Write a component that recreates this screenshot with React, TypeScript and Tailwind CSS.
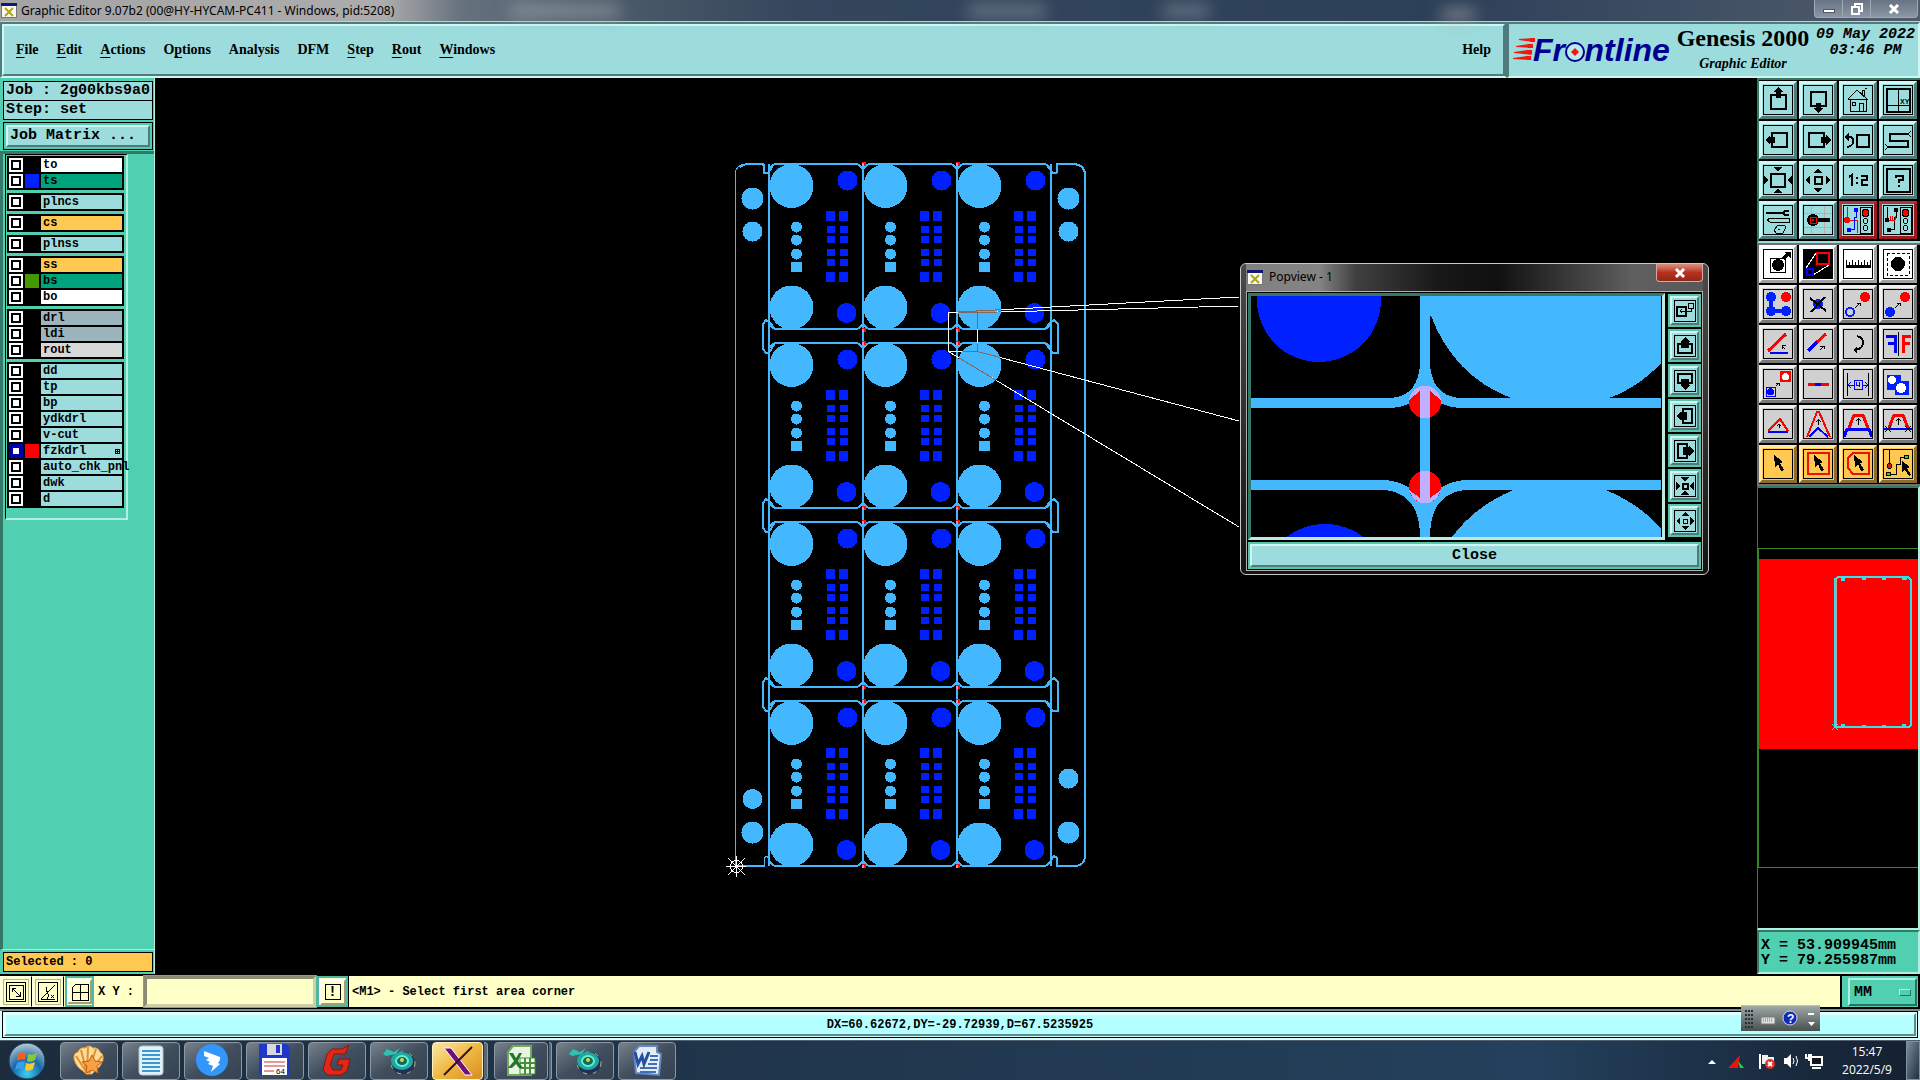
import { useState } from "react";
import type { ReactNode } from "react";

const SKY = "#44b8ff";
const BLUE = "#0020ff";

const menus = [
  { label: "File", key: 0 },
  { label: "Edit", key: 0 },
  { label: "Actions", key: 0 },
  { label: "Options", key: 1 },
  { label: "Analysis", key: -1 },
  { label: "DFM", key: -1 },
  { label: "Step", key: 0 },
  { label: "Rout", key: 0 },
  { label: "Windows", key: 0 },
];

type Layer = { name: string; bg: string; swatch?: string; active?: boolean };

const layerGroups: Layer[][] = [
  [
    { name: "to", bg: "bg-white" },
    { name: "ts", bg: "bg-[#00a47c]", swatch: "bg-[#0020ff]" },
  ],
  [{ name: "plncs", bg: "bg-[#9cdcdc]" }],
  [{ name: "cs", bg: "bg-[#ffc850]" }],
  [{ name: "plnss", bg: "bg-[#9cdcdc]" }],
  [
    { name: "ss", bg: "bg-[#ffc850]" },
    { name: "bs", bg: "bg-[#00a47c]", swatch: "bg-[#449800]" },
    { name: "bo", bg: "bg-white" },
  ],
  [
    { name: "drl", bg: "bg-[#9cb4bc]" },
    { name: "ldi", bg: "bg-[#9cb4bc]" },
    { name: "rout", bg: "bg-[#d8d8d8]" },
  ],
  [
    { name: "dd", bg: "bg-[#9cdcdc]" },
    { name: "tp", bg: "bg-[#9cdcdc]" },
    { name: "bp", bg: "bg-[#9cdcdc]" },
    { name: "ydkdrl", bg: "bg-[#9cdcdc]" },
    { name: "v-cut", bg: "bg-[#9cdcdc]" },
    { name: "fzkdrl", bg: "bg-[#9cdcdc]", swatch: "bg-[#ff0000]", active: true },
    { name: "auto_chk_pnl", bg: "bg-[#9cdcdc]" },
    { name: "dwk", bg: "bg-[#9cdcdc]" },
    { name: "d", bg: "bg-[#9cdcdc]" },
  ],
];

// bevel styles of the Motif buttons
const cyanTone =
  "bg-[#9cdcdc] border-t-[#d0f6f4] border-l-[#d0f6f4] border-b-[#4e7c7c] border-r-[#4e7c7c]";
const redTone =
  "bg-[#9cdcdc] border-t-[#b83038] border-l-[#b83038] border-b-[#9c1820] border-r-[#9c1820]";
const whiteTone =
  "bg-white border-t-white border-l-white border-b-[#a0a0a0] border-r-[#a0a0a0]";
const grayTone =
  "bg-[#d0d0d0] border-t-[#f0f0f0] border-l-[#f0f0f0] border-b-[#787878] border-r-[#787878]";
const orangeTone =
  "bg-[#ffc850] border-t-[#ffe8a8] border-l-[#ffe8a8] border-b-[#8c6c28] border-r-[#8c6c28]";
const tealTone =
  "bg-[#50d0b0] border-t-[#b0f0e0] border-l-[#b0f0e0] border-b-[#2c7060] border-r-[#2c7060]";

const Cursor = () => (
  <path d="M11 6 L20 13 L17 14 L21 21 L18 22 L15 15 L12 18Z" fill="#000" />
);

const TrafficLight = () => (
  <g fill="none" stroke="#000">
    <rect x="17" y="2" width="11" height="26" />
    <circle cx="22.5" cy="8" r="3.5" fill="#f00" />
    <circle cx="22.5" cy="16" r="2.5" />
    <circle cx="22.5" cy="23" r="2.5" />
  </g>
);

const viewTools: { name: string; tone: string; icon: ReactNode }[] = [
  {
    name: "Pan up",
    tone: cyanTone,
    icon: (
      <>
        <rect x="8" y="10" width="15" height="14" fill="none" stroke="#000" strokeWidth="2" />
        <path d="M15 2 L20 7 H18 V13 H13 V7 H10Z" />
      </>
    ),
  },
  {
    name: "Pan down",
    tone: cyanTone,
    icon: (
      <>
        <rect x="8" y="7" width="15" height="14" fill="none" stroke="#000" strokeWidth="2" />
        <path d="M15 28 L20 23 H18 V18 H13 V23 H10Z" />
      </>
    ),
  },
  {
    name: "Home",
    tone: cyanTone,
    icon: (
      <g fill="none" stroke="#000">
        <path d="M5 14 L14 5 L24 14 H5 M7 14 V26 H23 V14 M19 9 V5 H21 V11 M22 3 H24 M16 26 V18 H20 V26" />
        <rect x="9" y="17" width="3" height="3" />
      </g>
    ),
  },
  {
    name: "Zoom to XY",
    tone: cyanTone,
    icon: (
      <>
        <rect x="4" y="4" width="23" height="23" fill="none" stroke="#000" strokeWidth="2" />
        <path d="M4 20.5 H27 M15.5 4 V27" stroke="#000" />
        <text x="17" y="19" className="font-[Liberation_Sans,sans-serif] text-[7px] font-bold">XY</text>
      </>
    ),
  },
  {
    name: "Pan left",
    tone: cyanTone,
    icon: (
      <>
        <rect x="9" y="8" width="15" height="14" fill="none" stroke="#000" strokeWidth="2" />
        <path d="M2 15 L7 10 V12 H12 V18 H7 V20Z" />
      </>
    ),
  },
  {
    name: "Pan right",
    tone: cyanTone,
    icon: (
      <>
        <rect x="6" y="8" width="15" height="14" fill="none" stroke="#000" strokeWidth="2" />
        <path d="M28 15 L23 10 V12 H18 V18 H23 V20Z" />
      </>
    ),
  },
  {
    name: "Previous view",
    tone: cyanTone,
    icon: (
      <>
        <rect x="14" y="10" width="12" height="12" fill="none" stroke="#000" strokeWidth="2" />
        <path d="M4 12 H8 Q11 14 10 18 Q9 21 4 22" fill="none" stroke="#000" strokeWidth="2" />
        <path d="M1 12 L6 8 V16Z" />
      </>
    ),
  },
  {
    name: "Snake",
    tone: cyanTone,
    icon: (
      <>
        <path d="M26 9 H7 V16 H25 V22 H5" fill="none" stroke="#000" strokeWidth="2" />
        <path d="M28 6 L25 9 L28 12 M2 19 L5 22 L2 25" fill="none" stroke="#000" />
      </>
    ),
  },
  {
    name: "Zoom in",
    tone: cyanTone,
    icon: (
      <>
        <rect x="8" y="9" width="14" height="13" fill="none" stroke="#000" strokeWidth="2" />
        <path d="M15 6 L10 2 H20Z M15 24 L10 28 H20Z M5 15 L1 10 V20Z M25 15 L29 10 V20Z" />
      </>
    ),
  },
  {
    name: "Zoom out",
    tone: cyanTone,
    icon: (
      <>
        <rect x="12" y="12" width="7" height="7" fill="none" stroke="#000" strokeWidth="2" />
        <path d="M15 4 L10 8 H20Z M15 27 L10 23 H20Z M3 15 L7 10 V20Z M27 15 L23 10 V20Z" />
      </>
    ),
  },
  {
    name: "Scale",
    tone: cyanTone,
    icon: (
      <g fill="none" stroke="#000" strokeWidth="2">
        <path d="M6 12 L9 10 V21 M18 11 H24 V15 H19 V20 H25" />
        <path d="M13 13 H15 M13 18 H15" />
      </g>
    ),
  },
  {
    name: "Help on tool",
    tone: cyanTone,
    icon: (
      <>
        <rect x="4" y="4" width="23" height="23" fill="none" stroke="#000" strokeWidth="2" />
        <path d="M13 13 V11 H20 V15 H16 V18 M16 20 V22" fill="none" stroke="#000" strokeWidth="2" />
      </>
    ),
  },
  {
    name: "Setup",
    tone: cyanTone,
    icon: (
      <>
        <path d="M3 8 H20" stroke="#000" strokeWidth="2" />
        <path d="M26 6 H22 L20 8 L22 10 H26" fill="none" stroke="#000" strokeWidth="2" />
        <path d="M4 15 L7 13 H26 V17 H7Z" fill="none" stroke="#000" />
        <path d="M11 25 L15 20 H21 L23 22 L20 28 H13Z M15 24 H17" fill="none" stroke="#000" />
      </>
    ),
  },
  {
    name: "Probe",
    tone: cyanTone,
    icon: (
      <>
        <path d="M8 1 V29 M21 1 V29 M1 8 H29 M1 22 H29" stroke="#b8b0b0" />
        <path d="M15 15 H27" stroke="#000" strokeWidth="4" />
        <circle cx="10" cy="15" r="6" />
        <rect x="7" y="12" width="6" height="6" fill="none" stroke="#f00" />
        <rect x="9" y="14" width="2" height="2" fill="#f00" />
      </>
    ),
  },
  {
    name: "Net compare",
    tone: redTone,
    icon: (
      <>
        <path d="M4 2 V15 H14 V28" fill="none" stroke="#f00" />
        <path d="M13 5 V12 H11 V24 H7" fill="none" stroke="#00f" />
        <circle cx="4" cy="15" r="3" fill="#f00" />
        <circle cx="13" cy="5" r="2.5" fill="#00f" />
        <circle cx="6" cy="25" r="2.5" fill="#00f" />
        <TrafficLight />
      </>
    ),
  },
  {
    name: "Net check",
    tone: redTone,
    icon: (
      <>
        <path d="M4 2 V15 M13 5 V12 H11 V24 H7" fill="none" stroke="#000" />
        <path d="M4 15 H12 M7 11 V15 M9 11 V15 M12 11 V15" fill="none" stroke="#f00" />
        <circle cx="4" cy="15" r="2.5" />
        <circle cx="13" cy="5" r="2.5" />
        <circle cx="6" cy="25" r="2.5" />
        <TrafficLight />
      </>
    ),
  },
];

const editTools: { name: string; tone: string; icon: ReactNode }[] = [
  {
    name: "Move",
    tone: whiteTone,
    icon: (
      <>
        <rect x="7" y="9" width="15" height="14" fill="none" stroke="#000" />
        <circle cx="15" cy="16" r="6" />
        <path d="M20 10 L25 5" stroke="#000" strokeWidth="3" />
        <path d="M21 3 H28 V9Z" />
      </>
    ),
  },
  {
    name: "Popview",
    tone: whiteTone,
    icon: (
      <>
        <rect x="1" y="1" width="28" height="28" />
        <path d="M3 19 L13 4 M10 26 L26 16" stroke="#fff" />
        <rect x="14" y="4" width="12" height="11" fill="none" stroke="#f00" strokeWidth="2" />
        <rect x="4" y="20" width="6" height="6" fill="none" stroke="#00f" strokeWidth="2" />
      </>
    ),
  },
  {
    name: "Measure",
    tone: whiteTone,
    icon: (
      <path d="M3 11 H4 V16 H6 V13 H7 V16 H9 V11 H10 V16 H12 V13 H13 V16 H15 V11 H16 V16 H18 V13 H19 V16 H21 V11 H22 V16 H24 V13 H25 V16 H27 V11 H28 V19 H3Z" />
    ),
  },
  {
    name: "Select feature",
    tone: whiteTone,
    icon: (
      <>
        <rect x="4" y="4" width="22" height="22" fill="none" stroke="#000" strokeDasharray="3 2" />
        <circle cx="15" cy="15" r="7" />
      </>
    ),
  },
  {
    name: "Connect",
    tone: grayTone,
    icon: (
      <>
        <path d="M8 8 V22 H22" fill="none" stroke={BLUE} strokeWidth="4" />
        <circle cx="8" cy="8" r="5" fill={BLUE} />
        <circle cx="8" cy="22" r="5" fill={BLUE} />
        <circle cx="23" cy="22" r="5" fill={BLUE} />
        <circle cx="23" cy="8" r="5" fill="#f00" />
      </>
    ),
  },
  {
    name: "Delete",
    tone: grayTone,
    icon: (
      <>
        <circle cx="15" cy="15" r="5" fill={BLUE} />
        <path d="M7 9 L23 22 M22 8 L8 23" stroke="#000" strokeWidth="2" />
      </>
    ),
  },
  {
    name: "Copy pad",
    tone: grayTone,
    icon: (
      <>
        <circle cx="7" cy="23" r="4" fill="none" stroke={BLUE} strokeWidth="2" />
        <circle cx="22" cy="8" r="5" fill="#f00" />
        <path d="M12 19 L17 14 M14 14 H17 V17" fill="none" stroke="#000" />
      </>
    ),
  },
  {
    name: "Move pad",
    tone: grayTone,
    icon: (
      <>
        <circle cx="7" cy="23" r="5" fill={BLUE} />
        <circle cx="22" cy="8" r="5" fill="#f00" />
        <path d="M12 19 L17 14 M14 14 H17 V17" fill="none" stroke="#000" />
      </>
    ),
  },
  {
    name: "Angle",
    tone: grayTone,
    icon: (
      <>
        <path d="M5 22 L23 5" stroke="#f00" strokeWidth="3" />
        <path d="M7 24 H25" stroke="#00f" strokeWidth="2" />
        <path d="M22 20 L19 17 M19 20 V16 H23" fill="none" stroke="#000" />
      </>
    ),
  },
  {
    name: "Extend line",
    tone: grayTone,
    icon: (
      <>
        <path d="M5 22 L14 13" stroke="#00f" strokeWidth="3" />
        <path d="M14 13 L23 5" stroke="#f00" strokeWidth="3" />
        <path d="M17 21 L20 18 M17 17 H21 V20" fill="none" stroke="#000" />
      </>
    ),
  },
  {
    name: "Rotate",
    tone: grayTone,
    icon: (
      <>
        <path d="M14 7 Q21 9 20 15 Q19 20 12 21" fill="none" stroke="#000" strokeWidth="2" />
        <path d="M10 21 L14 17 V24Z" />
      </>
    ),
  },
  {
    name: "Mirror",
    tone: grayTone,
    icon: (
      <>
        <path d="M3 7 H12 V24 M5 14 H12" fill="none" stroke="#00f" strokeWidth="3" />
        <path d="M15.5 3 V27" stroke="#000" />
        <path d="M28 7 H20 V24 M27 14 H20" fill="none" stroke="#f00" strokeWidth="3" />
      </>
    ),
  },
  {
    name: "Substitute",
    tone: grayTone,
    icon: (
      <>
        <rect x="17" y="2" width="11" height="11" fill="#f00" />
        <circle cx="22.5" cy="7.5" r="3.5" fill="#fff" />
        <rect x="3" y="18" width="9" height="9" fill="none" stroke="#00f" />
        <circle cx="7.5" cy="22.5" r="3.5" fill="#00f" />
        <path d="M13 17 L16 14 M13 14 H16 V17" fill="none" stroke="#000" />
      </>
    ),
  },
  {
    name: "Merge line",
    tone: grayTone,
    icon: (
      <>
        <path d="M5 15 H26" stroke="#f00" strokeWidth="3" />
        <path d="M12 15 H18" stroke="#00f" strokeWidth="3" />
      </>
    ),
  },
  {
    name: "Spacing",
    tone: grayTone,
    icon: (
      <>
        <path d="M4.5 4 V27 M25.5 4 V27" stroke="#000" />
        <path d="M5 16 H11 M19 16 H25 M8 13 L5 16 L8 19 M22 13 L25 16 L22 19" fill="none" stroke="#00f" />
        <rect x="11" y="11" width="8" height="9" fill="none" stroke="#00f" />
        <path d="M13 13 V16 H17 M16 13 V18" fill="none" stroke="#00f" />
      </>
    ),
  },
  {
    name: "Surface",
    tone: grayTone,
    icon: (
      <>
        <path d="M4 6 H18 V12 H26 V26 H12 V21 H4Z" fill="#0020ff" />
        <circle cx="9" cy="11" r="4" fill="#fff" />
        <circle cx="18" cy="19" r="5" fill="#fff" />
      </>
    ),
  },
  {
    name: "Trim triangle",
    tone: grayTone,
    icon: (
      <>
        <path d="M5 22 L17 10 L25 22" fill="none" stroke="#f00" strokeWidth="2" />
        <path d="M5 23 H25" stroke="#00f" strokeWidth="2" />
        <path d="M16 19 V15 M14 17 L16 15 L18 17" fill="none" stroke="#000" />
      </>
    ),
  },
  {
    name: "Raise triangle",
    tone: grayTone,
    icon: (
      <>
        <path d="M4 28 L14 3 H16 L27 28" fill="none" stroke="#f00" strokeWidth="2" />
        <path d="M6 28 L15 19 L25 28" fill="none" stroke="#00f" strokeWidth="2" />
        <path d="M15.5 16 V11 M13 13 L15.5 11 L18 13" fill="none" stroke="#000" />
      </>
    ),
  },
  {
    name: "Move segment",
    tone: grayTone,
    icon: (
      <>
        <path d="M6 19 L11 6 H20 L25 19" fill="none" stroke="#f00" strokeWidth="3" />
        <path d="M1 28 L4 20 H26 L29 28" fill="none" stroke="#00f" strokeWidth="3" />
        <path d="M15.5 16 V10 M13 12 L15.5 10 L18 12" fill="none" stroke="#000" />
      </>
    ),
  },
  {
    name: "Stretch segment",
    tone: grayTone,
    icon: (
      <>
        <path d="M6 19 L11 6 H20 L25 19" fill="none" stroke="#f00" strokeWidth="3" />
        <path d="M1 20 H29" stroke="#00f" strokeWidth="2" />
        <path
          d="M15.5 16 V10 M13 12 L15.5 10 L18 12 M2 17 L8 23 M8 17 L2 23 M22 17 L28 23 M28 17 L22 23"
          fill="none"
          stroke="#000"
        />
      </>
    ),
  },
  { name: "Select", tone: orangeTone, icon: <Cursor /> },
  {
    name: "Select by rectangle",
    tone: orangeTone,
    icon: (
      <>
        <rect x="5" y="4" width="21" height="21" fill="none" stroke="#f01000" strokeWidth="2" />
        <Cursor />
      </>
    ),
  },
  {
    name: "Select by polygon",
    tone: orangeTone,
    icon: (
      <>
        <path d="M10 4 H26 V25 H10 L5 19 V9Z" fill="none" stroke="#f01000" strokeWidth="2" />
        <Cursor />
      </>
    ),
  },
  {
    name: "Select net",
    tone: orangeTone,
    icon: (
      <>
        <path d="M6.5 1 V17 M7 25 H13 V15 H17 V8 H22" fill="none" stroke="#000" />
        <circle cx="6.5" cy="17" r="2.5" fill="#c02010" stroke="#000" />
        <circle cx="5.5" cy="25" r="2" fill="#20e020" stroke="#000" />
        <circle cx="23.5" cy="8" r="2" fill="#20e020" stroke="#000" />
        <path d="M19 12 L27 18 L24 19 L28 26 L26 27 L22 21 L19 23Z" />
      </>
    ),
  },
];

const popTools: { name: string; icon: ReactNode }[] = [
  {
    name: "Swap view",
    icon: (
      <>
        <rect x="3" y="7" width="9" height="9" fill="none" stroke="#000" strokeWidth="2" />
        <rect x="14" y="3" width="5" height="5" fill="none" stroke="#000" />
        <path d="M17 8 V11 H6 M8 9 L6 11 L8 13" fill="none" stroke="#000" />
      </>
    ),
  },
  {
    name: "Popview up",
    icon: (
      <>
        <path d="M7 9 H4 V18 H18 V9 H15" fill="none" stroke="#000" strokeWidth="2" />
        <path d="M11 2 L16 7 H15 V13 H7 V7 H6Z" />
      </>
    ),
  },
  {
    name: "Popview down",
    icon: (
      <>
        <path d="M7 13 H4 V4 H18 V13 H15" fill="none" stroke="#000" strokeWidth="2" />
        <path d="M11 20 L16 15 H15 V9 H7 V15 H6Z" />
      </>
    ),
  },
  {
    name: "Popview left",
    icon: (
      <>
        <path d="M9 7 V4 H18 V18 H9 V15" fill="none" stroke="#000" strokeWidth="2" />
        <path d="M2 11 L7 6 V7 H13 V15 H7 V16Z" />
      </>
    ),
  },
  {
    name: "Popview right",
    icon: (
      <>
        <path d="M13 7 V4 H4 V18 H13 V15" fill="none" stroke="#000" strokeWidth="2" />
        <path d="M20 11 L15 6 V7 H9 V15 H15 V16Z" />
      </>
    ),
  },
  {
    name: "Popview zoom in",
    icon: (
      <>
        <rect x="9" y="9" width="5" height="5" fill="none" stroke="#000" strokeWidth="2" />
        <path d="M11 6 L6 2 H16Z M11 16 L6 20 H16Z M6 11 L2 6 V16Z M16 11 L20 6 V16Z" />
      </>
    ),
  },
  {
    name: "Popview zoom out",
    icon: (
      <>
        <rect x="9" y="9" width="4" height="4" fill="none" stroke="#000" />
        <path d="M11 2 L7 6 H15Z M11 20 L7 16 H15Z M2 11 L6 7 V15Z M20 11 L16 7 V15Z" />
      </>
    ),
  },
];

const ToolButton = ({ name, tone, icon }: { name: string; tone: string; icon: ReactNode }) => (
  <button
    type="button"
    aria-label={name}
    className={`flex size-[38px] items-center justify-center border-3 ${tone}`}
  >
    <svg
      viewBox="1 1 28 28"
      className="size-[30px] border border-black"
      shapeRendering="crispEdges"
    >
      {icon}
    </svg>
  </button>
);

const XIcon = () => (
  <svg viewBox="0 0 16 15" className="h-[15px] w-4 shrink-0">
    <rect x="0.5" y="0.5" width="15" height="14" fill="#f8f8f0" stroke="#777" />
    <rect width="16" height="3" fill="#101870" />
    <path d="M4 5 L12 13 M12 5 L4 13" stroke="#a8a818" strokeWidth="2" />
  </svg>
);

const columnsX = [769, 863, 957];
const rowsY = [164, 343, 522, 701];

// one board of the panel, drawn from its top left corner
const Board = ({ x, y }: { x: number; y: number }) => (
  <g transform={`translate(${x} ${y})`}>
    <rect width="94" height="165" rx="8" fill="none" stroke={SKY} strokeWidth="2" />
    <circle cx="22.5" cy="22" r="22" fill={SKY} />
    <circle cx="22.5" cy="143.5" r="22" fill={SKY} />
    <circle cx="78.5" cy="16.5" r="10" fill={BLUE} />
    <circle cx="77.5" cy="149" r="10" fill={BLUE} />
    {[63, 76, 90].map((cy) => (
      <circle key={cy} cx="27.5" cy={cy} r="5.5" fill={SKY} />
    ))}
    <rect x="22" y="98" width="11" height="10" fill={SKY} />
    {[47, 108].map((top) => (
      <g key={top} fill={BLUE}>
        <rect x="57" y={top} width="9" height="10" />
        <rect x="70" y={top} width="9" height="10" />
      </g>
    ))}
    {[62, 72, 85, 95].map((top) => (
      <g key={top} fill={BLUE}>
        <rect x="58" y={top} width="8" height="7" />
        <rect x="71" y={top} width="8" height="7" />
      </g>
    ))}
  </g>
);

const ViewLines = () => (
  <g fill="none" stroke="currentColor">
    <rect x="948.5" y="312.5" width="29" height="39" />
    <path d="M948.5 312.5 L1239 297 M977.5 312.5 L1239 306 M977.5 351.5 L1239 421 M948.5 351.5 L1239 527" />
  </g>
);

const PanelDrawing = () => (
  <svg viewBox="155 78 1602 896" className="block size-full" shapeRendering="crispEdges">
    <defs>
      <clipPath id="padClip">
        <circle cx="979.5" cy="307.5" r="22" />
        <circle cx="979.5" cy="365" r="22" />
      </clipPath>
    </defs>
    <g fill="none" stroke={SKY}>
      <path d="M764 173 V166 L761 164 H746 Q735 165 735 175 V866 H764 V858 L767 856 L769 860" />
      <path
        d="M1057 173 V164 H1074 Q1085 165 1085 175 V857 Q1084 865 1076 866 H1057 V858 L1054 856 L1051 860"
        strokeWidth="2"
      />
      <path d="M740 167 L746 164 H764 M764 164 V173 H768 L772 167 M1057 173 H1053 L1048 167" strokeWidth="2" />
      <path d="M735 866 H764" strokeWidth="2" />
      {columnsX.map((x) => (
        <path key={x} d={`M${x} 164 V866`} strokeWidth="2" />
      ))}
      <path d="M1051 164 V866" strokeWidth="2" />
      {[329, 508, 687].map((y) => (
        <g key={y} strokeWidth="2">
          <path d={`M775 ${y} L770 ${y - 6} L766 ${y - 9} L763 ${y - 5} V${y + 20} L766 ${y + 24} H769 L775 ${y + 14}`} />
          <path d={`M1045 ${y} L1050 ${y - 6} L1054 ${y - 9} L1058 ${y - 5} V${y + 24} H1053 L1045 ${y + 14}`} />
        </g>
      ))}
    </g>
    {rowsY.map((y) => columnsX.map((x) => <Board key={`${x}-${y}`} x={x} y={y} />))}
    <g fill={SKY}>
      <circle cx="752.5" cy="198.5" r="11" />
      <circle cx="752.5" cy="231.5" r="10" />
      <circle cx="752.5" cy="799" r="10" />
      <circle cx="752.5" cy="832.5" r="11" />
      <circle cx="1068.5" cy="198.5" r="11" />
      <circle cx="1068.5" cy="231.5" r="10" />
      <circle cx="1068.5" cy="778.5" r="10" />
      <circle cx="1068.5" cy="832.5" r="11" />
    </g>
    {[162, 328, 341, 506, 520, 685, 699, 864].map((y) =>
      [862, 956].map((x) => (
        <g key={`${x}-${y}`}>
          <rect x={x} y={y} width="4" height="4" fill="#f01010" />
          <rect x={x} y={y + 1} width="2" height="3" fill="#e090c0" />
        </g>
      ))
    )}
    <g className="text-white">
      <ViewLines />
    </g>
    <g className="text-[#86685a]" clipPath="url(#padClip)">
      <ViewLines />
    </g>
    <g fill="none" stroke="#fff">
      <path d="M726 866.5 H746 M736.5 856 V877 M728 858 L745 875 M745 858 L728 875" />
      <circle cx="736.5" cy="866.5" r="6" />
    </g>
  </svg>
);

const Popview = ({ onClose }: { onClose: () => void }) => (
  <section className="absolute top-[185px] right-[48px] flex h-[312px] w-[469px] flex-col rounded-md border border-[#c8c8c8] bg-linear-to-b from-[#4a4a4a] via-[#303030] to-[#141414] px-[5px] pb-[5px]">
    <header className="flex h-[27px] shrink-0 items-start bg-[linear-gradient(90deg,#808080_0%,#848484_16%,#404040_24%,#181818_42%,#101010_55%,#606060_85%,#585858_100%)] pl-px">
      <div className="flex items-center gap-1.5 pt-[5px]">
        <XIcon />
        <h2 className="font-[Noto_Sans,sans-serif] text-xs leading-4 text-black">Popview - 1</h2>
      </div>
      <button
        type="button"
        aria-label="Close window"
        onClick={onClose}
        className="ml-auto flex h-[18px] w-[47px] items-center justify-center rounded-b border border-t-0 border-[#d8a8a0] bg-linear-to-b from-[#d89080] via-[#b83020] to-[#902818]"
      >
        <svg viewBox="0 0 12 10" className="h-2.5 w-3">
          <path d="M2 1 L10 9 M10 1 L2 9" stroke="#fff" strokeWidth="3" />
        </svg>
      </button>
    </header>
    <div className="flex flex-1 flex-col gap-0.5 border border-[#b0b0b0] bg-black p-px">
      <div className="flex flex-1 gap-[3px]">
        <div className="flex-1 border-3 border-t-[#347868] border-r-[#c0e8dc] border-b-[#c0e8dc] border-l-[#347868] bg-black">
          <svg
            viewBox="2 0 411 241"
            preserveAspectRatio="none"
            className="block size-full"
            shapeRendering="crispEdges"
          >
            <circle cx="70" cy="4" r="62" fill={BLUE} />
            <circle cx="76" cy="291" r="63" fill={BLUE} />
            <path d="M171 0 H412 V67 Q390 91 360 102 H262 Q205 80 182 20 H171Z" fill={SKY} />
            <path d="M203 241 Q225 211 264 194 H357 Q390 208 412 232 V241Z" fill={SKY} />
            <g fill="none" stroke={SKY} strokeWidth="10">
              <path d="M2 107 H143 Q176 104 176 64 V0" />
              <path d="M412 107 H210 Q176 104 176 64" />
              <path d="M2 189 H136 Q176 193 176 241" />
              <path d="M412 189 H216 Q176 193 176 241" />
              <path d="M176 60 V241" />
            </g>
            <circle cx="176" cy="106" r="16" fill="#f00" />
            <circle cx="176" cy="191" r="16" fill="#f00" />
            <path d="M171 90 H181 V122 H171Z M171 175 H181 V207 H171Z" fill="#c0b0ff" />
            <path
              d="M160 104 Q163 90 176 90 Q189 90 192 104 L181 95 H171Z M160 194 Q165 207 176 207 Q187 207 192 194 L181 202 H171Z"
              fill="#c0b0ff"
            />
          </svg>
        </div>
        <div className="flex w-[33px] flex-col gap-0.5 pt-px">
          {popTools.map((tool) => (
            <button
              key={tool.name}
              type="button"
              aria-label={tool.name}
              className="flex size-[33px] items-center justify-center border-2 border-[#58c4a8] bg-[#9cdcdc]"
            >
              <span className={`flex size-[29px] items-center justify-center border-2 ${cyanTone}`}>
                <svg
                  viewBox="1 1 20 20"
                  className="size-[22px] border border-black"
                  shapeRendering="crispEdges"
                >
                  {tool.icon}
                </svg>
              </span>
            </button>
          ))}
        </div>
      </div>
      <button
        type="button"
        onClick={onClose}
        className="h-[27px] shrink-0 border-2 border-[#58c4a8] font-[Liberation_Mono,monospace] text-[15px] leading-none font-bold"
      >
        <span className={`flex h-full items-center justify-center border-2 ${cyanTone}`}>Close</span>
      </button>
    </div>
  </section>
);

const LayerRow = ({ layer }: { layer: Layer }) => (
  <li className="flex h-3.5 gap-0.5">
    <input
      type="checkbox"
      aria-label={layer.name}
      className={`size-3.5 shrink-0 appearance-none border-2 bg-white outline-2 -outline-offset-4 ${
        layer.active ? "border-[#0000a8] outline-[#0000a8]" : "border-white outline-black"
      }`}
    />
    <span className={`size-3.5 shrink-0 ${layer.swatch ?? "bg-black"}`} />
    <span
      className={`flex w-[81px] items-center pl-0.5 text-xs leading-[14px] font-bold whitespace-nowrap ${layer.bg}`}
    >
      {layer.name}
      {layer.active && (
        <svg viewBox="0 0 5 5" className="mr-0.5 ml-auto size-[5px]" shapeRendering="crispEdges">
          <path
            d="M0 0 H5 V5 H0Z M1 1 V2 H2 V1Z M3 1 V2 H4 V1Z M1 3 V4 H2 V3Z M3 3 V4 H4 V3Z"
            fillRule="evenodd"
          />
        </svg>
      )}
    </span>
  </li>
);

const LayerPanel = () => (
  <aside className="flex w-[155px] shrink-0 flex-col border-r border-[#b0f0e0] bg-[#50d0b0] font-[Liberation_Mono,monospace] text-black">
    <div className="flex flex-col gap-0.5 pt-[3px] pr-px pl-[3px]">
      <div className="border border-black bg-[#9cdcdc] text-[15px] leading-[18px] font-bold whitespace-pre">
        <p className="border-b border-black pl-0.5">Job : 2g00kbs9a0</p>
        <p className="pl-0.5">Step: set</p>
      </div>
      <div className="border border-black p-0.5">
        <button
          type="button"
          className={`block h-[22px] w-full border-2 pl-0.5 text-left text-[15px] leading-[18px] font-bold ${cyanTone}`}
        >
          Job Matrix ...
        </button>
      </div>
    </div>
    <div className="mt-px flex flex-1 flex-col border-t-3 border-b border-l-3 border-t-[#347868] border-b-[#b0f0e0] border-l-[#347868] pl-0.5">
      <ul className="flex w-[123px] flex-col gap-[3px] border border-r-2 border-b-2 border-t-black border-r-[#b0f0e0] border-b-[#b0f0e0] border-l-black px-px pt-px pb-2.5">
        {layerGroups.map((group) => (
          <li key={group[0].name}>
            <ul className="flex w-[117px] flex-col gap-0.5 bg-black p-0.5">
              {group.map((layer) => (
                <LayerRow key={layer.name} layer={layer} />
              ))}
            </ul>
          </li>
        ))}
      </ul>
    </div>
    <p className="my-0.5 mr-px ml-[3px] h-5 border border-black bg-[#ffc850] pl-0.5 text-xs leading-[18px] font-bold">
      Selected : 0
    </p>
  </aside>
);

const ToolPanel = () => (
  <aside className="flex w-[163px] shrink-0 flex-col bg-black text-black">
    <div className="grid grid-cols-[repeat(4,38px)] gap-0.5 border-t-2 border-b-2 border-l-2 border-t-[#347868] border-b-[#9cdcdc] border-l-[#347868] pt-px pb-0.5">
      {viewTools.map((tool) => (
        <ToolButton key={tool.name} {...tool} />
      ))}
    </div>
    <div className="grid grid-cols-[repeat(4,38px)] gap-0.5 border-2 border-r-0 border-[#707070] pb-px">
      {editTools.map((tool) => (
        <ToolButton key={tool.name} {...tool} />
      ))}
    </div>
    <div className="min-h-0 flex-1 border-2 border-l border-t-[#347868] border-r-[#b0f0e0] border-b-[#b0f0e0] border-l-[#347868]">
      <svg
        viewBox="0 0 160 440"
        preserveAspectRatio="none"
        className="block size-full"
        shapeRendering="crispEdges"
      >
        <rect x="0" y="71" width="160" height="190" fill="#f00" />
        <path d="M160 60.5 H0.5 V379.5 H160" fill="none" stroke="#388828" />
        <path
          d="M77 92 L80 89 H150 L153 92 V237 L151 239 H78 M77 90 V239"
          fill="none"
          stroke="#38e0e8"
          strokeWidth="2"
        />
        <path d="M78 92 V237" stroke="#b0a8a8" strokeWidth="2" />
        <path
          d="M83 89 H87 V93 H83Z M104 90 H108 V92 H104Z M124 90 H128 V92 H124Z M144 89 H149 V92 H144Z M83 236 H87 V240 H83Z M104 237 H108 V240 H104Z M124 237 H128 V240 H124Z M144 236 H148 V240 H144Z"
          fill="#38e0e8"
        />
        <path d="M74 236 L80 242 M80 236 L74 242" stroke="#38e0e8" />
      </svg>
    </div>
    <div className="h-11 shrink-0 border-2 border-t-[#347868] border-r-[#b0f0e0] border-b-[#b0f0e0] border-l-[#347868] bg-[#50d0b0] pt-1.5 pl-0.5 font-[Liberation_Mono,monospace] text-[15px] leading-[15px] font-bold whitespace-nowrap">
      <p>X = 53.909945mm</p>
      <p>Y = 79.255987mm</p>
    </div>
  </aside>
);

const snapModes = [
  { name: "Snap to corner", d: "M3 3 H17 V17 H3Z M6 6 L14 14 M6 10 V6 H10 M14 10 V14 H10" },
  {
    name: "Snap to angle",
    d: "M3 17 L17 3 M3 17 H17 M8 5 V9 H11 M9 17 Q12 13 9 11 M13 13 L16 16 M16 13 L13 16",
  },
];

const CommandBar = () => {
  const [coords, setCoords] = useState("");

  return (
    <div className="flex h-[35px] shrink-0 items-stretch border-y-2 border-black bg-[#ffffc8] font-[Liberation_Mono,monospace] text-xs font-bold text-black">
      {snapModes.map((mode) => (
        <button
          key={mode.name}
          type="button"
          aria-label={mode.name}
          className="flex w-8 items-center justify-center border border-t-[#ffffe8] border-r-black border-b-[#ffffe8] border-l-[#ffffe8]"
        >
          <span className="flex size-[26px] items-center justify-center border border-[#b8b890]">
            <svg viewBox="1 1 18 18" className="size-5 border border-black" shapeRendering="crispEdges">
              <path d={mode.d} fill="none" stroke="#000" />
            </svg>
          </span>
        </button>
      ))}
      <button
        type="button"
        aria-label="Grid"
        className="ml-px flex w-[29px] items-center justify-center border-2 border-[#50b8a0]"
      >
        <span className="flex size-[25px] items-center justify-center border-2 border-t-white border-r-[#a0a078] border-b-[#a0a078] border-l-white">
          <svg viewBox="0 0 18 18" className="size-[18px]" shapeRendering="crispEdges">
            <path d="M5 1 H17 V17 H1 V5Z M9 1 V17 M1 9 H17" fill="none" stroke="#000" />
          </svg>
        </span>
      </button>
      <label htmlFor="xy" className="flex w-[50px] items-center pl-1 text-xs">
        X Y :
      </label>
      <input
        id="xy"
        value={coords}
        onChange={(e) => setCoords(e.target.value)}
        className="w-[172px] border-3 border-t-[#8c8c74] border-r-[#d0d0a8] border-b-[#d0d0a8] border-l-[#8c8c74] bg-[#ffffc8] px-1 outline outline-[#50b8a0]"
      />
      <button
        type="button"
        aria-label="Alert"
        className="ml-px flex w-[31px] items-center justify-center border-2 border-[#50b8a0]"
      >
        <span className="flex size-[26px] items-center justify-center border-2 border-t-white border-r-[#a0a078] border-b-[#a0a078] border-l-white">
          <span className="flex size-4 items-center justify-center border border-black text-sm leading-none">
            !
          </span>
        </span>
      </button>
      <p className="flex flex-1 items-center border-l border-black pl-[3px]">
        &lt;M1&gt; - Select first area corner
      </p>
      <div className="w-20 border-x-2 border-black bg-[#50d0b0] pt-0.5 pl-1.5">
        <button
          type="button"
          className={`flex h-7 w-[69px] items-center justify-between border-2 px-1 text-[15px] leading-none ${tealTone}`}
        >
          MM
          <span className={`h-[7px] w-3 border ${tealTone}`} />
        </button>
      </div>
    </div>
  );
};

const taskIcons: { name: string; icon: ReactNode }[] = [
  {
    name: "Shell",
    icon: (
      <>
        <path
          d="M2 15 Q1 9 6 8 Q8 3 13 4 Q17 0 21 4 Q26 3 28 8 Q32 10 31 16 Q29 23 23 27 L20 30 H14 L11 27 Q4 23 2 15Z"
          fill="#fcdc98"
          stroke="#e09838"
        />
        <path d="M15 29 L4 12 M15 29 L9 6 M15 29 L16 3 M16 29 L24 5 M17 29 L30 12" stroke="#e09030" strokeWidth="2" />
        <path
          d="M20 11 L23 17 L30 18 L25 22 L26 29 L20 26 L14 29 L15 22 L10 18 L17 17Z"
          fill="#f8a048"
          stroke="#c06010"
        />
      </>
    ),
  },
  {
    name: "Notes",
    icon: (
      <>
        <rect x="5" y="2" width="24" height="29" rx="3" fill="#e4f2f8" stroke="#a8c8d8" />
        <path d="M8 7 H26 M8 11 H26 M8 15 H26 M8 19 H26 M8 23 H26 M8 27 H26" stroke="#3898d0" strokeWidth="2" />
      </>
    ),
  },
  {
    name: "DingTalk",
    icon: (
      <>
        <circle cx="16" cy="16" r="16" fill="#3296fa" />
        <path d="M8 7 L24 13 Q25 15 22 19 L24 20 L15 28 L17 22 L12 20 L14 18 L10 16 L13 14 L8 12Z" fill="#fff" />
      </>
    ),
  },
  {
    name: "Total Commander",
    icon: (
      <>
        <path d="M1 0 H28 L32 3 V31 H1Z" fill="#2038c8" />
        <rect x="9" y="0" width="15" height="11" fill="#d8d8e0" />
        <rect x="18" y="1" width="4" height="8" fill="#2038c8" />
        <rect x="4" y="14" width="25" height="17" fill="#fff" />
        <path d="M6 18 H27 M6 22 H27 M6 27 H16" stroke="#c83030" />
        <text x="18" y="30" className="font-[Liberation_Sans,sans-serif] text-[8px]">64</text>
      </>
    ),
  },
  {
    name: "G",
    icon: (
      <path
        d="M29 1 L25 10 H14 L10 21 L13 26 H21 L23 21 H17 L19 15 H30 L27 27 L21 31 H8 L3 26 L7 10 L12 5 H22Z"
        fill="#e02818"
        stroke="#981008"
      />
    ),
  },
  {
    name: "CAM",
    icon: (
      <>
        <ellipse cx="21" cy="19" rx="12" ry="11" fill="#203058" stroke="#b8b870" strokeDasharray="4 6" />
        <ellipse cx="20" cy="17" rx="11" ry="9" fill="#20a8a0" />
        <ellipse cx="20" cy="17" rx="6" ry="5" fill="#106860" stroke="#60f0d0" strokeWidth="2" />
        <circle cx="20" cy="16" r="2" fill="#e8d040" />
        <path d="M1 10 L5 5 L12 8 L18 4 L14 10 L4 12Z" fill="#30c0b0" />
      </>
    ),
  },
];

const ExcelIcon = () => (
  <>
    <path d="M9 2 H27 V31 H4 V8Z" fill="#e8f4e0" stroke="#70a860" strokeWidth="2" />
    <path d="M16 14 H31 V30 H16Z" fill="#f0f8ec" stroke="#489038" />
    <path d="M16 19 H31 M16 24 H31 M21 14 V30 M26 14 V30" stroke="#489038" strokeWidth="2" />
    <path d="M5 9 H9 L12 14 L15 9 H18 L14 17 L19 24 H15 L12 20 L8 24 H4 L10 17Z" fill="#207828" />
  </>
);

const WordIcon = () => (
  <>
    <path d="M9 2 H27 V8 L31 10 L29 31 L6 29 L4 8Z" fill="#e4ecf8" stroke="#6088c0" strokeWidth="2" />
    <path d="M20 12 H28 M20 16 H28 M18 20 H27 M10 24 H27 M10 28 H26" stroke="#4070b8" strokeWidth="2" />
    <path d="M5 8 L8 20 L12 12 L14 20 L19 8" fill="none" stroke="#2050a0" strokeWidth="3" />
  </>
);

const TaskButton = ({ name, children }: { name: string; children: ReactNode }) => (
  <button
    type="button"
    aria-label={name}
    className="flex h-[38px] w-[58px] shrink-0 items-center justify-center rounded-sm border border-[#8c98a4] bg-linear-to-br from-[#78828c] via-[#404e5e] to-[#344252]"
  >
    <svg viewBox="0 0 34 34" className="size-[34px]">
      {children}
    </svg>
  </button>
);

const Taskbar = () => (
  <footer className="flex h-10 shrink-0 items-center border-t border-[#506070] bg-linear-to-r from-[#1c2c3c] via-[#24405c] via-80% to-[#142030] font-[Open_Sans,sans-serif] text-white">
    <button type="button" aria-label="Start" className="ml-2 flex w-[38px] items-center justify-center">
      <svg viewBox="0 0 38 38" className="size-[38px]">
        <defs>
          <radialGradient id="orb" cx="50%" cy="85%" r="80%">
            <stop offset="0" stopColor="#40d0f8" />
            <stop offset="0.5" stopColor="#1868a8" />
            <stop offset="1" stopColor="#a8c0d0" />
          </radialGradient>
        </defs>
        <circle cx="19" cy="19" r="18" fill="url(#orb)" stroke="#183850" />
        <path d="M10 12 Q14 9 18 11 L17 18 Q13 16 9 19Z" fill="#f06020" />
        <path d="M20 12 Q24 14 29 11 L27 18 Q23 21 19 19Z" fill="#88c838" />
        <path d="M9 21 Q13 18 17 20 L15 27 Q11 25 7 28Z" fill="#38a0e8" />
        <path d="M18 21 Q22 23 27 20 L25 27 Q21 30 17 28Z" fill="#f8c830" />
      </svg>
    </button>
    <div className="ml-3.5 flex gap-1">
      {taskIcons.map((task) => (
        <TaskButton key={task.name} name={task.name}>
          {task.icon}
        </TaskButton>
      ))}
      <div className="flex w-[58px] gap-px">
        <button
          type="button"
          aria-label="Genesis"
          className="flex h-[38px] w-[51px] items-center justify-center rounded-sm border border-[#fff0c0] bg-linear-to-br from-[#f8e8a0] via-[#f0b840] to-[#d88c20]"
        >
          <svg viewBox="0 0 34 34" className="size-[34px]">
            <path d="M3 4 H10 L31 31 H24Z" fill="#701078" stroke="#fff" />
            <path d="M31 3 L3 31" stroke="#301030" strokeWidth="2" />
          </svg>
        </button>
        <span className="h-[38px] w-1 rounded-r border border-l-0 border-[#8c98a4] bg-[#586674]" />
      </div>
      <div className="flex gap-px">
        <button
          type="button"
          aria-label="Excel"
          className="flex h-[38px] w-[54px] items-center justify-center rounded-sm border border-[#8c98a4] bg-linear-to-br from-[#78828c] via-[#404e5e] to-[#344252]"
        >
          <svg viewBox="0 0 34 34" className="size-[34px]">
            <ExcelIcon />
          </svg>
        </button>
        <span className="h-[38px] w-[3px] rounded-r border border-l-0 border-[#8c98a4] bg-[#586674]" />
      </div>
      <TaskButton name="CAM 2">{taskIcons[5].icon}</TaskButton>
      <TaskButton name="Word">
        <WordIcon />
      </TaskButton>
    </div>
    <div className="ml-auto flex h-full items-center">
      <svg viewBox="0 0 120 20" className="mr-4 h-5 w-[120px]">
        <path d="M4 13 L8 9 L12 13Z" fill="#fff" />
        <path d="M24 17 L36 4 L34 17Z" fill="#f01010" />
        <path d="M34 10 L40 17 H36Z" fill="#20d838" />
        <path d="M56 3 V18" stroke="#fff" strokeWidth="2" />
        <path d="M58 4 H64 V6 H70 V13 H58Z" fill="#f0f0f0" />
        <circle cx="66" cy="13" r="5" fill="#e03020" />
        <path d="M64 11 L68 15 M68 11 L64 15" stroke="#fff" strokeWidth="2" />
        <path d="M80 7 H83 L87 3 V17 L83 13 H80Z" fill="#fff" />
        <path d="M89 7 Q91 10 89 13 M92 5 Q95 10 92 15" fill="none" stroke="#fff" />
        <rect x="107" y="6" width="11" height="8" fill="#101820" stroke="#fff" strokeWidth="2" />
        <path d="M105 3 V10 M102 3 V7 H107 V3 M108 17 H117" fill="none" stroke="#fff" strokeWidth="2" />
      </svg>
      <p className="w-[54px] text-center text-xs leading-[18px] whitespace-nowrap">
        15:47
        <br />
        2022/5/9
      </p>
      <span className="ml-3 h-full w-3.5 border border-[#8090a0] bg-linear-to-br from-[#808c98] to-[#203040]" />
    </div>
  </footer>
);

const Header = () => (
  <>
    <div className="flex h-[22px] shrink-0 items-center border-b border-[#c8ccd0] bg-[linear-gradient(90deg,#a4a4a4_0%,#acacac_20%,#66727e_24%,#4c5a68_32%,#33465c_42%,#2c4058_75%,#505c6c_100%)] pl-px">
      <XIcon />
      <h1 className="ml-1 font-[Noto_Sans,sans-serif] text-xs leading-4 whitespace-nowrap text-black">
        Graphic Editor 9.07b2 (00@HY-HYCAM-PC411 - Windows, pid:5208)
      </h1>
      <div className="ml-[6%] h-3 w-28 rounded-full bg-[#a8b0b8]/60 blur-sm" />
      <div className="ml-[18%] h-3 w-20 rounded-full bg-[#a8b0b8]/50 blur-sm" />
      <div className="ml-[6%] h-3 w-12 rounded-full bg-[#a8b0b8]/50 blur-sm" />
      <div className="ml-[12%] h-3 w-9 self-end rounded-full bg-[#b8b0b0]/60 blur-sm" />
      <div className="mr-0.5 ml-auto flex h-[18px] self-start rounded-b border border-t-0 border-[#a0a8b4] bg-linear-to-b from-[#687484] to-[#8c96a4]">
        <button
          type="button"
          aria-label="Minimize"
          className="flex w-7 items-end justify-center border-r border-[#a0a8b4] pb-1"
        >
          <span className="h-1 w-3 border border-[#505860] bg-white" />
        </button>
        <button
          type="button"
          aria-label="Restore"
          className="flex w-7 items-center justify-center border-r border-[#a0a8b4]"
        >
          <svg viewBox="0 0 12 12" className="size-3">
            <path d="M4 3 V1 H11 V8 H9" fill="none" stroke="#fff" strokeWidth="2" />
            <rect x="1" y="4" width="7" height="7" fill="none" stroke="#fff" strokeWidth="2" />
          </svg>
        </button>
        <button type="button" aria-label="Close" className="flex w-[46px] items-center justify-center">
          <svg viewBox="0 0 12 10" className="h-2.5 w-3">
            <path d="M2 1 L10 9 M10 1 L2 9" stroke="#fff" strokeWidth="3" />
          </svg>
        </button>
      </div>
    </div>
    <div className="flex h-14 shrink-0 bg-[#9cdcdc] text-black">
      <nav className="flex flex-1 border-2 border-t-[#4e7c7c] border-r-[#4e7c7c] border-b-[#d0f6f4] border-l-[#4e7c7c] font-[Liberation_Serif,serif] text-sm leading-5 font-bold">
        <div className={`flex flex-1 items-center gap-[18px] border-2 pr-3 pl-3 ${cyanTone}`}>
          {menus.map(({ label, key }) => (
            <button key={label} type="button">
              {key < 0 ? (
                label
              ) : (
                <>
                  {label.slice(0, key)}
                  <span className="underline underline-offset-3">{label[key]}</span>
                  {label.slice(key + 1)}
                </>
              )}
            </button>
          ))}
          <button type="button" className="ml-auto">
            Help
          </button>
        </div>
      </nav>
      <div className="flex w-[413px] shrink-0 border-2 border-t-[#4e7c7c] border-r-[#d0f6f4] border-b-[#d0f6f4] border-l-[#4e7c7c] pl-1">
        <svg viewBox="0 0 162 50" className="h-[50px] w-[162px] shrink-0">
          <g fill="#f01810">
            <path d="M6 15 L20 14 L22 18 L6 16Z M3 22 L16 20 L20 24 L3 23Z M1 28 L14 26 L19 31 L1 29Z M0 34 L14 32 L19 36 L0 35Z" />
            <rect x="17" y="14" width="5" height="4" />
            <rect x="15" y="20" width="5" height="4" />
            <rect x="14" y="26" width="5" height="4" />
            <rect x="13" y="32" width="5" height="4" />
          </g>
          <text
            x="20"
            y="37"
            className="fill-[#000090] font-[Liberation_Sans,sans-serif] text-[32px] font-bold italic"
          >
            Fr<tspan className="fill-transparent">o</tspan>ntline
          </text>
          <circle cx="62" cy="28" r="9" fill="#b8ecec" stroke="#000090" strokeWidth="2" />
          <path d="M62 24 L66 28 L62 32 L58 28Z" fill="#f01810" />
        </svg>
        <div className="flex w-[136px] flex-col items-center font-[Liberation_Serif,serif] font-bold whitespace-nowrap">
          <p className="text-2xl leading-7">Genesis 2000</p>
          <p className="text-sm leading-6 italic">Graphic Editor</p>
        </div>
        <p className="flex-1 pt-[3px] pl-0.5 text-center font-[Liberation_Mono,monospace] text-[15px] leading-4 font-bold whitespace-nowrap italic">
          09 May 2022
          <br />
          03:46 PM
        </p>
      </div>
    </div>
  </>
);

const App = () => {
  const [popviewOpen, setPopviewOpen] = useState(true);

  return (
    <div className="flex h-screen flex-col overflow-hidden bg-black">
      <Header />
      <div className="flex min-h-0 flex-1">
        <LayerPanel />
        <main className="relative min-w-0 flex-1 bg-black">
          <PanelDrawing />
          {popviewOpen && <Popview onClose={() => setPopviewOpen(false)} />}
        </main>
        <ToolPanel />
      </div>
      <CommandBar />
      <div className="relative h-[31px] shrink-0 border-t-2 border-[#808c8c] bg-[#d8ffff] px-0.5 pb-0.5">
        <div className="h-full border border-black p-px">
          <p className="flex h-full items-center justify-center border-2 border-t-[#e8ffff] border-r-[#5c8c8c] border-b-[#5c8c8c] border-l-[#e8ffff] bg-[#b4ffff] font-[Liberation_Mono,monospace] text-xs font-bold text-black">
            DX=60.62672,DY=-29.72939,D=67.5235925
          </p>
        </div>
        <div className="absolute -top-1.5 right-[100px] flex h-[26px] w-[79px] items-center border-t border-[#c0c0c0] bg-linear-to-b from-[#a0a8a8] to-[#485050]">
          <svg viewBox="0 0 79 25" className="h-[25px] w-[79px]">
            {[5, 9, 13, 17, 21].map((y) => (
              <path key={y} d={`M4 ${y} H12`} stroke="#283030" strokeWidth="2" strokeDasharray="2 1" />
            ))}
            <rect x="20" y="11" width="14" height="7" fill="#e0e0e0" stroke="#787878" />
            <path d="M22 13 H32 M22 15 H32" stroke="#787878" strokeDasharray="1 1" />
            <circle cx="49" cy="12" r="7" fill="#1028b8" stroke="#d0d8f0" />
            <path d="M67 8 H73" stroke="#fff" strokeWidth="2" />
            <path d="M67 16 H74 L70.5 20Z" fill="#fff" />
            <text x="46" y="17" className="fill-white font-[Liberation_Sans,sans-serif] text-xs font-bold">?</text>
          </svg>
        </div>
      </div>
      <Taskbar />
    </div>
  );
};

export default App;
